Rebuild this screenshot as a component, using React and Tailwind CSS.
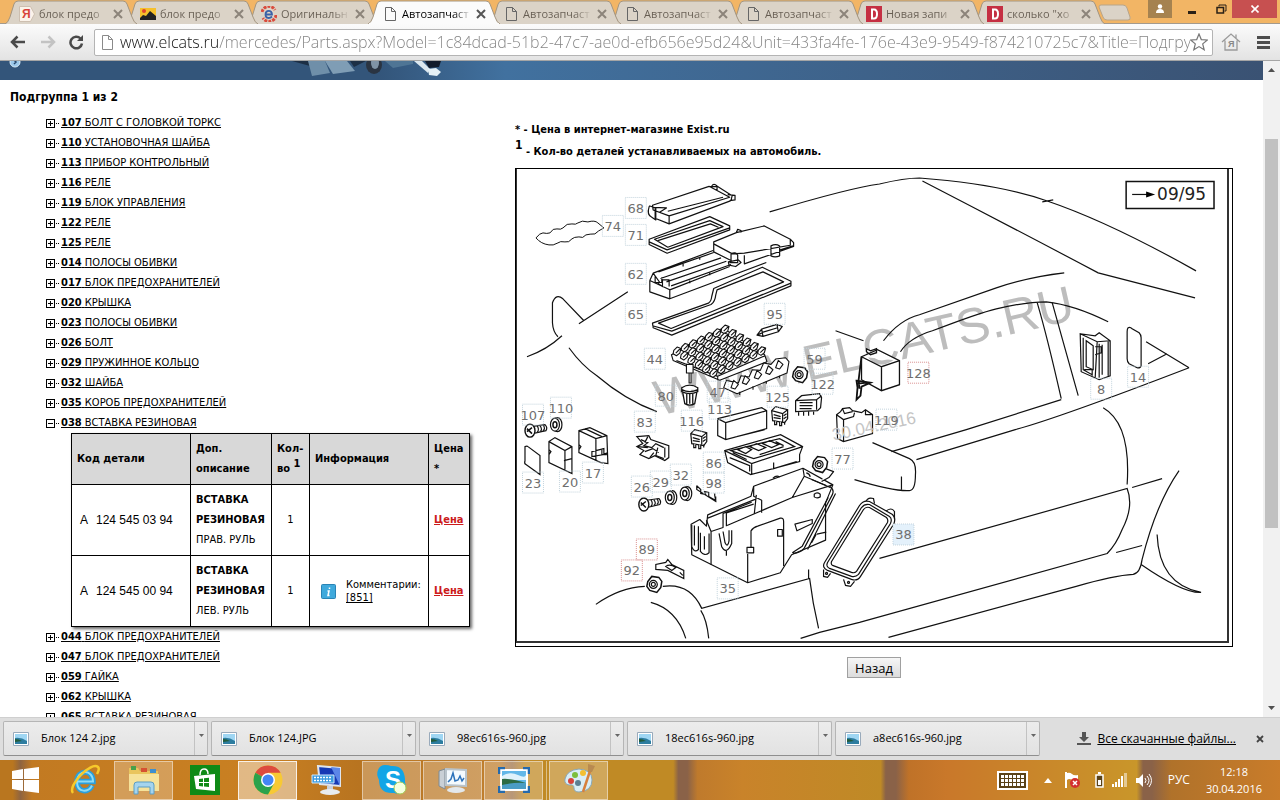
import { Fragment } from 'react'

const tabs = [
  { icon: 'yandex', title: 'блок предо' },
  { icon: 'images', title: 'блок предо' },
  { icon: 'exist', title: 'Оригинальн' },
  { icon: 'page', title: 'Автозапчаст', active: true },
  { icon: 'page', title: 'Автозапчаст' },
  { icon: 'page', title: 'Автозапчаст' },
  { icon: 'page', title: 'Автозапчаст' },
  { icon: 'drive', title: 'Новая запи' },
  { icon: 'drive', title: 'сколько "хо' },
]

const url =
  'www.elcats.ru/mercedes/Parts.aspx?Model=1c84dcad-51b2-47c7-ae0d-efb656e95d24&Unit=433fa4fe-176e-43e9-9549-f874210725c7&Title=Подгруппа'

const parts = [
  ['107', 'БОЛТ С ГОЛОВКОЙ ТОРКС'],
  ['110', 'УСТАНОВОЧНАЯ ШАЙБА'],
  ['113', 'ПРИБОР КОНТРОЛЬНЫЙ'],
  ['116', 'РЕЛЕ'],
  ['119', 'БЛОК УПРАВЛЕНИЯ'],
  ['122', 'РЕЛЕ'],
  ['125', 'РЕЛЕ'],
  ['014', 'ПОЛОСЫ ОБИВКИ'],
  ['017', 'БЛОК ПРЕДОХРАНИТЕЛЕЙ'],
  ['020', 'КРЫШКА'],
  ['023', 'ПОЛОСЫ ОБИВКИ'],
  ['026', 'БОЛТ'],
  ['029', 'ПРУЖИННОЕ КОЛЬЦО'],
  ['032', 'ШАЙБА'],
  ['035', 'КОРОБ ПРЕДОХРАНИТЕЛЕЙ'],
  ['038', 'ВСТАВКА РЕЗИНОВАЯ', true],
  ['044', 'БЛОК ПРЕДОХРАНИТЕЛЕЙ'],
  ['047', 'БЛОК ПРЕДОХРАНИТЕЛЕЙ'],
  ['059', 'ГАЙКА'],
  ['062', 'КРЫШКА'],
  ['065', 'ВСТАВКА РЕЗИНОВАЯ'],
]

const details = [
  { code: '124 545 03 94', side: 'ПРАВ. РУЛЬ' },
  { code: '124 545 00 94', side: 'ЛЕВ. РУЛЬ', note: '[851]' },
]

const files = ['Блок 124 2.jpg', 'Блок 124.JPG', '98ec616s-960.jpg', '18ec616s-960.jpg', 'a8ec616s-960.jpg']

// callouts on the drawing: number, centre x, centre y, kind
const labels = [
  [68, 636, 208], [74, 613, 226], [71, 636, 235], [62, 636, 274], [65, 636, 314], [95, 775, 314],
  [44, 655, 359], [59, 815, 359], [80, 666, 396], [47, 718, 392], [122, 823, 384], [125, 778, 397],
  [113, 720, 409], [116, 692, 421], [107, 533, 415], [110, 561, 408], [83, 645, 422], [128, 919, 373, 'red'],
  [119, 887, 420], [8, 1102, 389], [14, 1139, 377], [77, 843, 459], [86, 714, 463], [98, 714, 483],
  [32, 681, 475], [29, 661, 482], [26, 642, 487], [23, 533, 483], [20, 570, 482], [17, 593, 473],
  [89, 647, 550, 'red'], [92, 632, 571, 'red'], [35, 728, 589], [38, 904, 535, 'active'],
]

function TabIcon({ kind }) {
  if (kind === 'yandex')
    return (
      <svg className="size-4 shrink-0" viewBox="0 0 16 16">
        <path d="M.5.5h11l4 7.500-4 7.500H.5z" fill="#fbf3ea" stroke="#cdbfb0" />
        <text x="3" y="12" fontSize="12" fontWeight="bold" fill="#d8433a" fontFamily="Liberation Sans">Я</text>
      </svg>
    )
  if (kind === 'images')
    return (
      <svg className="size-4 shrink-0" viewBox="0 0 16 16">
        <path fill="#f6c02c" d="M0 2h16v12H0z" />
        <path d="M0 12l3-3 3 1 4-5 6 5v4H0z" fill="#222" />
        <circle cx="4" cy="5" r="2" fill="#e2452f" />
      </svg>
    )
  if (kind === 'exist')
    return (
      <svg className="size-4 shrink-0" viewBox="0 0 16 16" fill="none">
        <path d="M1 6A7 7 0 0 1 14 4M15 9A7 7 0 0 1 2 12" stroke="#d94b3c" strokeWidth="3" strokeDasharray="3 1" />
        <circle cx="8" cy="8" r="5" fill="#e5d6c8" />
        <path d="M4.500 8.500h6.500c0-5-6.500-4.500-6.500 0s4.500 4 6.500 2" stroke="#3a62a8" strokeWidth="1.800" />
      </svg>
    )
  if (kind === 'drive')
    return (
      <svg className="size-4 shrink-0" viewBox="0 0 16 16">
        <path fill="#c52f42" d="M0 0h16v16H0z" />
        <path d="M6 3.500h2q3 0 3 4.500t-3 4.500H6z" fill="none" stroke="#fff" strokeWidth="2" />
      </svg>
    )
  return (
    <svg className="size-4 shrink-0" viewBox="0 0 16 16" fill="none" stroke="#666">
      <path d="M3.500 1.500h6l4 4v9h-10zM9.500 1.500v4h4" />
    </svg>
  )
}

function Tab({ tab, index }) {
  const fill = tab.active ? '#fbfbfb' : '#dbd3c7'
  return (
    <button
      className="relative w-[121px] h-full flex items-center pl-3.5 pt-1 shrink-0 text-left"
      style={{ zIndex: tab.active ? 20 : 10 - index }}
    >
      <svg className="absolute left-0 bottom-0" width="133" height="24" viewBox="0 0 133 24">
        <path d="M0 24 Q3 23 5 17 L9 4 Q10 1 13 1 H118 Q121 1 122 4 L127 17 Q129 23 132 24" fill={fill} stroke="#a39580" />
        {tab.active && <path d="M1 24H131" stroke="#fbfbfb" strokeWidth="2" />}
      </svg>
      <span className="relative flex items-center gap-1">
        <TabIcon kind={tab.icon} />
        <span
          className={`w-[69px] whitespace-nowrap bg-clip-text text-transparent bg-linear-to-r from-75% to-transparent text-[11px] leading-4 ${
            tab.active ? 'from-black' : 'from-[#665d52]'
          }`}
        >
          {tab.title}
        </span>
        <svg className="size-3" viewBox="0 0 12 12" stroke={tab.active ? '#555' : '#8c847a'} strokeWidth="2">
          <path d="M2 2l8 8M10 2l-8 8" />
        </svg>
      </span>
    </button>
  )
}

function TabStrip() {
  return (
    <div className="flex h-6 bg-[#f2b565] shrink-0 border-b border-[#a39a8d]">
      <div className="flex h-6 pl-[5px] flex-1 min-w-0 font-['Open_Sans',sans-serif]">
        {tabs.map((tab, i) => (
          <Tab key={i} tab={tab} index={i} />
        ))}
        <button aria-label="Новая вкладка" className="ml-1 mt-1 shrink-0 h-4">
          <svg width="34" height="17" viewBox="0 0 34 17">
            <path d="M3 1h22q3 0 4 3l3 9q1 3-2 3H9q-3 0-4-3L1 3q0-2 2-2z" fill="#dbd3c7" stroke="#b8a58a" />
          </svg>
        </button>
      </div>
      <div className="flex shrink-0 items-start pr-[3px]">
        <button aria-label="Профиль" className="w-6 h-[18px] bg-[#a58250] flex items-center justify-center">
          <svg width="10" height="10" viewBox="0 0 10 10" fill="#fff">
            <circle cx="5" cy="2.500" r="2.200" />
            <path d="M1 9q0-4 4-4t4 4z" />
          </svg>
        </button>
        <button aria-label="Свернуть" className="w-[38px] h-[18px] flex items-end justify-center pb-1 pl-0.5">
          <span className="w-2 h-[3px] bg-[#2a2016]" />
        </button>
        <button aria-label="Восстановить" className="w-[22px] h-[18px] flex items-center justify-center">
          <svg width="11" height="10" viewBox="0 0 11 10" fill="none" stroke="#2a2016">
            <path d="M3 2.500V1h7v6H8.500" />
            <path d="M1 3.500h6.500v5.500H1z" strokeWidth="1.500" />
          </svg>
        </button>
        <button aria-label="Закрыть" className="w-[45px] h-[18px] bg-[#c75050] flex items-center justify-center">
          <svg width="8" height="8" viewBox="0 0 8 8" stroke="#fff" strokeWidth="1.600">
            <path d="M.5.5l7 7M7.500.5l-7 7" />
          </svg>
        </button>
      </div>
    </div>
  )
}

function Toolbar() {
  return (
    <div className="flex items-center h-[37px] shrink-0 bg-linear-to-b from-[#fbfbfb] to-[#e3e3e3] border-b border-[#a5a5a5] px-2.5">
      <button aria-label="Назад" className="mr-3.5">
        <svg width="16" height="14" viewBox="0 0 16 14" fill="none" stroke="#4a4a4a" strokeWidth="2.500">
          <path d="M15 7H2M7.500 1.500L2 7l5.500 5.500" />
        </svg>
      </button>
      <button aria-label="Вперёд" className="mr-3">
        <svg width="16" height="14" viewBox="0 0 16 14" fill="none" stroke="#c3c3c3" strokeWidth="2.500">
          <path d="M1 7h13M8.500 1.500L14 7l-5.500 5.500" />
        </svg>
      </button>
      <button aria-label="Обновить" className="mr-2.5">
        <svg width="16" height="16" viewBox="0 0 16 16" fill="none" stroke="#4a4a4a" strokeWidth="2.500">
          <path d="M12.500 4.500A5.800 5.800 0 1 0 14 9.500" />
          <path d="M9 7h6V1z" fill="#4a4a4a" stroke="none" />
        </svg>
      </button>
      <div className="flex items-center flex-1 min-w-0 h-[27px] bg-white border border-[#b4b4b4] rounded-xs pl-1.5 pr-1">
        <svg width="13" height="17" viewBox="0 0 13 17" fill="none" stroke="#8a8a8a" className="shrink-0 mr-1.5">
          <path d="M1.500 1.500h6l4 4v10h-10zM7.500 1.500v4h4" />
        </svg>
        <input
          type="text"
          aria-label="Адрес"
          defaultValue={url}
          className="flex-1 min-w-0 text-[16px] leading-6 text-transparent bg-clip-text bg-[linear-gradient(90deg,#111_99px,#808080_99px)] font-['Open_Sans',sans-serif] font-light outline-none"
        />
        <svg width="18" height="18" viewBox="0 0 18 18" fill="#fff" stroke="#777" strokeWidth="1.200" className="shrink-0">
          <path d="M9 1l2.300 5.600 6 .4-4.600 3.900 1.500 5.900L9 13.600l-5.200 3.200 1.500-5.900L.7 7l6-.4z" />
        </svg>
      </div>
      <button aria-label="Домой" className="ml-2 mr-4">
        <svg width="20" height="20" viewBox="0 0 20 20" fill="none" stroke="#9a9a9a" strokeWidth="1.300">
          <path d="M1 10l9-8 9 8M4 8.500V18h12V8.500M15 6V2.500" />
          <text x="7" y="15" fontSize="9" fill="#888" stroke="none" fontFamily="Liberation Sans" fontWeight="bold">Я</text>
        </svg>
      </button>
      <button aria-label="Меню" className="flex flex-col gap-[2px]">
        <span className="w-[13px] h-[3px] bg-[#4d4d4d]" />
        <span className="w-[13px] h-[3px] bg-[#4d4d4d]" />
        <span className="w-[13px] h-[3px] bg-[#4d4d4d]" />
      </button>
    </div>
  )
}

function Banner() {
  return (
    <div className="h-[19px] shrink-0 bg-linear-to-r from-[#33557a] from-30% via-[#41719f] via-40% to-[#3a5273]">
      <svg width="460" height="19" viewBox="0 0 460 19">
        <circle cx="15" cy="1" r="5" fill="#9cc8ea" stroke="#d8ecf8" />
        <path d="M14-1l2 2-2 2" stroke="#24466a" fill="none" strokeWidth="1.500" />
        <path d="M292 0h20l-2 5z" fill="#1d2f45" />
        <path d="M308 0l4 15 18-3-5-12z" fill="#6f8fa9" />
        <path d="M325 0l8 13 22-3-8-10z" fill="#7f9db5" />
        <path d="M350 0l4 6 12-6z" fill="#1d2f45" />
        <ellipse cx="374" cy="4" rx="8" ry="9" fill="#2a3442" />
        <ellipse cx="375" cy="2" rx="4" ry="6" fill="#7f93a6" />
        <path d="M385 0l8 7 20-4V0z" fill="#4f7595" />
        <path d="M414 0h8l8 8-2 4z" fill="#dce8f0" />
        <path d="M425 0h16l-2 6-10 1z" fill="#121c2c" />
        <path d="M428 8l8-1 5 4-4 4-8-1z" fill="#e4f0f6" />
      </svg>
    </div>
  )
}

function DetailTable() {
  return (
    <table className="ml-[71px] w-[399px] table-fixed border-collapse border border-black text-[11px] leading-5 shadow-[2px_2px_3px_#666] bg-white">
      <thead>
        <tr className="bg-[#d8d8d8] text-left">
          <th className="w-[119px] border border-black p-[5px] whitespace-nowrap">Код детали</th>
          <th className="w-[81px] border border-black p-[5px]">Доп. описание</th>
          <th className="w-[38px] border border-black p-[5px] whitespace-nowrap">
            Кол-
            <br />
            во <sup className="text-[11px]">1</sup>
          </th>
          <th className="w-[119px] border border-black p-[5px]">Информация</th>
          <th className="border border-black p-[5px]">
            Цена
            <br />*
          </th>
        </tr>
      </thead>
      <tbody>
        {details.map((d) => (
          <tr key={d.code}>
            <td className="border border-black p-[5px] pl-2 text-[12px] font-['Liberation_Sans',sans-serif]">
              <span className="mr-2">A</span>
              {d.code}
            </td>
            <td className="border border-black p-[5px] whitespace-nowrap">
              <b>
                ВСТАВКА
                <br />
                РЕЗИНОВАЯ
              </b>
              <br />
              {d.side}
            </td>
            <td className="border border-black p-[5px] text-center">1</td>
            <td className="border border-black p-[5px]">
              {d.note && (
                <div className="flex items-center gap-2.5 pl-1.5">
                  <svg width="15" height="15" viewBox="0 0 15 15" className="shrink-0">
                    <rect x=".5" y=".5" width="14" height="14" rx="1" fill="#3fa9dc" stroke="#2a83b5" />
                    <path d="M8.500 3.500v1.500M6.500 7h1.500l-1 4.500h1.500" stroke="#fff" strokeWidth="1.500" fill="none" />
                  </svg>
                  <span className="leading-[13px]">
                    Комментарии:
                    <br />
                    <a href="#851" className="underline">{d.note}</a>
                  </span>
                </div>
              )}
            </td>
            <td className="border border-black p-[5px]">
              <a href="#price" className="underline font-bold text-[#cc1b1b]">Цена</a>
            </td>
          </tr>
        ))}
      </tbody>
    </table>
  )
}

function PartList() {
  return (
    <ul>
      {parts.map(([num, name, open]) => (
        <Fragment key={num}>
          <li className="flex items-center h-5 pl-[46px] whitespace-nowrap">
            <svg width="15" height="9" viewBox="0 0 15 9" className="shrink-0" shapeRendering="crispEdges">
              <path d={open ? 'M.5.5h8v8h-8zM2 4.500h5' : 'M.5.5h8v8h-8zM2 4.500h5M4.500 2v5'} fill="none" stroke="#000" />
              <path d="M10 4h1v1h-1zM12 4h1v1h-1z" />
            </svg>
            <a href={'#' + num} className="text-[11px] leading-5 underline">
              <b>{num}</b> {name}
            </a>
          </li>
          {open && (
            <li>
              <DetailTable />
            </li>
          )}
        </Fragment>
      ))}
    </ul>
  )
}

// rows of terminals on fuse block 44
const studs = []
for (let row = 0; row < 6; row++)
  for (let col = 0; col < 7; col++) studs.push([492 + col * 24 + row * 22, 722 - col * 11 + row * 13])

function Nut({ x, y }) {
  return (
    <g transform={`translate(${x} ${y})`} fill="#fff">
      <path d="M-7-3l4-5 7 1 3 4-1 6-4 5-7-2-3-4z" strokeWidth="1.500" />
      <circle cx="-1.500" r="4" />
      <circle cx="-1.500" r="2" />
    </g>
  )
}

function Screw({ x, y }) {
  return (
    <g transform={`translate(${x} ${y})`} fill="#fff">
      <path d="M-3-4l14-2q3 3 1 6l-13 3z" />
      <path d="M3-5q3 4 0 7M6-5q3 4 0 6M9-6q3 4 0 6" />
      <ellipse cx="-4" cy="0" rx="5" ry="6.500" strokeWidth="1.400" />
      <path d="M-7-2l5 5M-2-3l-5 4" strokeWidth="1.500" />
    </g>
  )
}

function Washer({ x, y }) {
  return (
    <g transform={`translate(${x} ${y})`} fill="#fff">
      <ellipse cx="1.500" cy="0" rx="4.500" ry="7" />
      <ellipse cx="-1" cy="0" rx="4.500" ry="6.500" />
      <ellipse cx="-1" cy="0" rx="2" ry="3" strokeWidth="1.500" />
    </g>
  )
}

function Relay({ x, y }) {
  return (
    <g transform={`translate(${x} ${y})`} fill="#fff">
      <path d="M-8-5l4-4 12 3v9l-3 4-12-2zM-8-5l11 3 5-4M3-2v8" />
      <path d="M-6-1l7 2M-6 2l7 1M4 0l3-2M4 3l3-2M-5 5v4h2v-3M0 6v4h2v-4M5 6v3" />
    </g>
  )
}

function PartsDrawing() {
  return (
    <svg
      viewBox="517 169 711 473"
      className="block w-full h-auto font-normal"
      fill="none"
      stroke="#111"
      strokeWidth="1.200"
      role="img"
      aria-label="Схема деталей"
    >
      <text transform="translate(659 416) rotate(-13)" fontSize="50" fill="#bdbdbd" stroke="none" fontFamily="Liberation Sans">
        WWW.ELCATS.RU
      </text>

      {/* body lines */}
      <path d="M770 212Q850 188 880 184Q905 178 920 178Q1000 184 1048 201Q1110 222 1197 271M923 181Q1010 226 1099 273L1196 298M1043 202l11-2" />
      <path d="M884 341Q900 320 920 315L997 288Q1030 277 1065 273M901 352Q910 338 933 331Q980 313 997 309Q1027 302 1047 302Q1075 305 1109 322" />
      <path d="M1038 303Q1048 337 1062 399M1053 303L1079 396M1062 400L967 430L892 452M1190 368Q1060 418 1016 430L917 460M1147 342l43 26M1149 364l19-10" />
      <path d="M1104 408Q1132 424 1128 485M873 443L910 459Q917 462 916 475Q916 491 910 491Q895 492 855 480M902 477v13" />
      <path d="M880 559L1128 489Q1135 507 1123 530Q1117 545 1108 554L860 623L820 633L801 639M1133 488l30-9M1117 553l26-7" />
      <path d="M1180 471Q1157 504 1143 560Q1141 574 1134 575Q1115 576 1077 587L889 638M1142 565Q1184 594 1202 593Q1160 585 1158 535" />
      <path d="M596 605Q620 588 645 587M663 587Q690 583 702 609L810 579Q813 604 819 629M809 570v9M651 603Q677 610 686 639M701 611Q707 620 709 639" />
      <path d="M579 324L628 292M584 321L563 299Q556 293 552.500 303V323Q553 332 558 337M527 357Q547 350 562 336M569 348Q582 366 597 376Q625 400 657 412M836 331l28 10" />

      {/* left strip 74 */}
      <path d="M536 238q4-5 7-5 4 1 7 0 3-5 7-4 4 1 6-1 4-5 9-4 4 1 6-1 4-3 10-1 7-2 10 1l6 5q-6 3-9 6-5 0-9 1-3 4-7 2-5 0-7 2-3 4-7 3-5-1-7 1-5 3-9 2-8-1-13-7z" strokeWidth="1" />

      {/* covers 68, 71 */}
      <g transform="translate(510 110) scale(.33333)" strokeWidth="3.600" strokeLinejoin="round">
        <path d="M428 286L598 229L660 262L478 318L430 300zM598 229L625 230L665 256M474 304L640 262M478 318V342L436 325M478 342L664 272L668 254M418 290q-8 25 8 32l12 8v-36l-18-6zM430 292l40 2-22 14M436 296v30M606 228q6-10 16 0v12M654 254l22 2v14l-16 2" />
        <path d="M418 388L600 320L660 348V360L472 430L418 404zM434 388L600 332L640 350L474 412zM418 396l54 24L660 354M444 392L602 342L626 352" />
      </g>

      {/* lid 62 */}
      <g transform="translate(510 110) scale(.33333)" strokeWidth="3.600" strokeLinejoin="round">
        <path d="M420 512L430 490L610 422M420 512V546L480 567L770 458M420 512L480 540V567M480 540L660 470M430 490L450 518M446 486L612 428M452 506L634 444M470 516L650 454M484 528L664 464M436 500v18h20v-16M444 520l14 10v-20h20v20" />
        <path d="M612 396L680 368L764 348L842 388V406L704 430L668 432L612 402zM612 396V426L664 452V432M842 388L852 398V410L704 462V436M680 368l4-10 10 4v6M784 408q14-8 26 0v30q-14 6-26 0zM812 420l38-12M664 432q14-8 20 4v22h-24M656 456l30-6 8 8-16 12-20-4zM520 462v8M570 442v8M540 512v8M600 488v8" />
      </g>

      {/* gasket 65 and bulb 95 */}
      <g transform="translate(510 110) scale(.33333)" strokeWidth="3.600" strokeLinejoin="round">
        <path d="M428 640L596 580Q604 576 606 560L612 536L758 472L844 514V528L486 676L430 654zM446 640L604 584Q616 576 618 556L622 540L760 486L822 516L484 656zM428 648l58 16L844 520" />
        <path d="M742 676l14-18 46-14 16 6-12 16-46 14zM756 658l4 22M802 644l4 22M742 676l14-6M758 668l46-14" />
      </g>

      {/* fuse blocks 44, 47 */}
      <g transform="translate(510 110) scale(.33333)" strokeWidth="3.300" strokeLinejoin="round" fill="#fff">
        <path d="M485 735L640 655L765 735L772 756L630 812L490 752zM500 752L624 800L766 738M624 800v12" />
        {studs.map(([x, y], i) => (
          <path key={i} d={`M${x} ${y}l10-10 12 4-4 14-10 8-10-6zM${x + 6} ${y + 8}l10-10 6-4`} />
        ))}
        <path d="M650 812l-8 22 40 18 150-62 6-34-10-12-30 4-14 16-22-4-10 22-24-2-10 22-24-4-8 22z" />
        <path d="M672 812l14 12-10 14-12-4zM706 798l14 12-10 14-12-4zM742 782l14 12-10 14-12-4zM776 768l14 12-10 14-12-4zM806 752l14 12-10 14-12-4zM690 846v10M730 830v10M770 814v8M810 798v8" />
        <path d="M530 764h20v26h-20zM538 790h6v30h-6z" />
      </g>

      {/* motor 80 */}
      <g fill="#fff" strokeWidth="1.300">
        <path d="M682 388q8-5 16 0v4q-8 4-16 0zM683 393l2 11q5 3 10 0l2-11M687 394v10M690 394v10M693 394v10M682 390q8 4 16 0" />
      </g>

      <Nut x={801} y={375} />
      <Nut x={821} y={465} />
      <Nut x={655} y={585} />
      <Screw x={534} y={431} />
      <Screw x={648} y={505} />
      <Washer x={556} y={425} />
      <Washer x={671} y={498} />
      <Washer x={686} y={494} />
      <Relay x={699} y={439} />
      <Relay x={780} y={416} />

      {/* relay 122, control unit 113 */}
      <g fill="#fff">
        <path d="M796 401l6-5 18-2 2 4-1 10-3 3-22 1zM796 401l21-1 5-4M817 400v10M800 403h13M800 406h13M800 409h12M799 412v4M804 412v4M809 412v4M814 412v3" />
        <path d="M718 419L762 408L767 411V429L726 440L718 436zM718 419L726 423V440M726 423L767 411M737 437l28-7" />
      </g>

      {/* boxes 17, 20, 23 */}
      <g fill="#fff">
        <path d="M579 431L590 428L607 436L608 464L601 463L579 453zM579 431L596 439L607 436M585 429L602 437M596 439V461M579 445l2 2-2 3M592 452l12-3v6l-12 2zM602 449v6h5M603 455l5-2" />
        <path d="M549 442L555 438L572 447V474L549 463zM549 442L565 451L572 447M565 451V470M549 450l2 2-2 3M564 461l8-2" />
        <path d="M525 447q2-1 3 0l12 9V475L526 465q-2-1-1-4z" />
      </g>

      {/* bracket 83 and clip 98 */}
      <g fill="#fff">
        <path d="M637 437l12-1 2 4 18 6v12l-4 3-10-5-6 3-9-4 4-4-7-4 6-3z" />
        <path d="M641 440l7 3-4 3 8 2 4-4 8 4M645 452l8-3 6 4M650 458l4-5M658 448l-2 8 8 3M665 448v10M638 447l10 1M648 437l-3 6" />
        <path d="M697 486l4 4v4l5 1-1-3 4 1v4l7 4-1-5v-2M697 486v4l19 12v-5" fill="none" />
      </g>

      {/* fuse tray 86 */}
      <g fill="#fff">
        <path d="M725 451L781 435L803 447L800 455V462L751 475L728 463zM725 451L752 464L803 447M752 464V475M731 451L780 439L795 447L754 459zM738 450l8 4 6-4-6-3zM750 447l9 4 7-3-9-4zM763 444l9 4 7-3-9-4zM776 442l8 4M733 453l14 7M760 455l24-8M774 463v6l23-7M730 458l20 8v6" />
      </g>

      {/* main box 35 */}
      <g transform="translate(510 370) scale(.33333)" strokeWidth="3.600" strokeLinejoin="round" fill="#fff">
        <path d="M546 556L544 464L570 450L590 470L594 436L724 380L732 350L880 296L970 346L948 400V512L846 556L812 610L714 640z" />
        <path d="M594 446L740 388M590 452L604 486L640 474V432L726 398M650 470V430L732 404M732 350V380L756 392V430M740 376l-6 56M652 468L848 384L970 346M848 384L884 320L880 296M884 320L950 348M604 486V586M714 640V554M724 540V484Q730 474 744 470L812 446Q822 444 822 456V590" fill="none" />
        <path d="M712 534h20v16h-20zM804 480h14v20h-14zM856 464L908 450V462L862 484zM914 374q8-8 18 0v8q-10 6-18 0zM906 330l56 24M936 336l22-12 14-18-22-8" />
        <path d="M960 350Q976 360 968 376L884 536Q874 550 850 552M978 372L894 540M956 384L878 530L848 550M922 494l28-6M906 520l14-26" fill="none" />
        <path d="M546 466v66q8 20 20 8v-70M572 490v56q12 16 26 4v-58M584 500v40M554 468v60M628 492l8 40q14 26 30-10v-40M640 486l6 34q8 16 12-6v-32M650 545v14" />
        <path d="M790 326q10-10 20-4M890 310q10 2 12 12" fill="none" />
      </g>

      {/* bracket 89 */}
      <path d="M656 565v5l12 1 16 8v-8l-12-6-4-5-2 3zM666 567q4-3 10 1l-4 3zM680 573l3 3" fill="#fff" />

      {/* gasket 38 */}
      <g fill="#fff">
        <path d="M824 570v7l4 1 3-4M844 580l2 6 5 1 4-5M866 503q2-6 8-4l1 5M886 512q6-5 9 0v8" />
        <circle cx="827" cy="574" r="1" />
        <circle cx="849" cy="583" r="1" />
        <path d="M825 563L860 506Q864 500 870 502L893 515Q897 519 894 525L861 577Q858 582 852 580L828 571Q822 568 825 563z" />
        <path d="M828 563L862 508Q865 504 870 505L890 517Q893 519 891 524L859 575Q856 578 852 577L830 569Q826 567 828 563z" />
        <path d="M832 562L864 510Q866 507 870 508L887 518Q889 520 888 523L857 572Q855 574 852 573L833 566Q831 565 832 562z" />
      </g>

      {/* relay 128 and unit 119 */}
      <g fill="#fff" strokeWidth="1.300">
        <path d="M862 357L878 350L900 361V385L882 391L862 380zM862 357L882 367L900 361M882 367V391M867 352v-3l4 2 6-2v4l-6 2z" />
        <path d="M862 357l-3 24 1 8M857 381l14 2-9 4-1 9-4 4 1-12zM858 384l10-1" strokeWidth="1.800" />
      </g>
      <path d="M837 415L841 412L843 409L850 408L853 411L862 413L866 410L873 415V434L844 442L838 439zM837 415L844 420V442M844 420l10-3 1-4M843 409l2 5 8-2M866 410v5h6" fill="#fff" />

      {/* unit 8, pad 14 */}
      <g fill="#fff">
        <path d="M1081 334L1096 336L1100 333L1111 341V376L1100 380L1082 372zM1081 334L1098 342L1111 341M1098 342L1096 378M1084 338V370L1093 375M1087 341v26l7 3v-24zM1100 344v34M1096 347h6v6l-6 2M1103 345v30M1085 370h8v6M1109 342v34" />
        <path d="M1129 328q2-1 4 1l7 4q2 2 2 5v28q-1 3-4 2l-8-4q-2-2-2-5v-27q0-3 1-4z" />
      </g>

      {/* edition stamp */}
      <path d="M1127 181.500h88v27h-88z" strokeWidth="1.500" />
      <path d="M1133 194.500h15" />
      <path d="M1147 191.500l9 3-9 3z" fill="#000" stroke="none" />
      <text x="1158" y="200" fontSize="17" fill="#222" stroke="none" fontFamily="DejaVu Sans">09/95</text>
      <text transform="translate(834 441) rotate(-12)" fontSize="17" fill="#c4c4c4" stroke="none" fontFamily="Liberation Sans">
        30.04.2016
      </text>

      {labels.map(([n, x, y, kind]) => (
        <g key={n}>
          <rect
            x={x - 10.5}
            y={y - 10.5}
            width="21"
            height="21"
            strokeWidth="1"
            strokeDasharray="1 1"
            fill={kind === 'active' ? '#e4f1fb' : 'none'}
            stroke={kind === 'red' ? '#d98f8f' : '#c2d3dc'}
          />
          <text x={x} y={y + 5} fontSize="13" textAnchor="middle" fill="#6f6f6f" stroke="none" fontFamily="DejaVu Sans">
            {n}
          </text>
        </g>
      ))}
    </svg>
  )
}

function Scrollbar() {
  return (
    <div className="w-[17px] shrink-0 bg-[#f1f1f1] flex flex-col items-center py-1.5">
      <svg width="7" height="6" viewBox="0 0 7 6" className="shrink-0">
        <path d="M0 5l3.500-4L7 5z" fill="#505050" />
      </svg>
      <div className="flex-1 w-full px-0.5 flex flex-col">
        <div className="basis-[10.500%]" />
        <div className="basis-[61.500%] bg-[#c1c1c1]" />
      </div>
      <svg width="7" height="6" viewBox="0 0 7 6" className="shrink-0">
        <path d="M0 1l3.500 4L7 1z" fill="#505050" />
      </svg>
    </div>
  )
}

function Page() {
  return (
    <div className="flex flex-1 min-h-0 bg-white">
      <main className="flex-1 min-w-0 overflow-hidden flex flex-col text-black font-['DejaVu_Sans_Condensed','DejaVu_Sans',sans-serif]">
        <Banner />
        <div className="flex items-start">
          <section className="w-[515px] shrink-0">
            <h1 className="pl-2.5 pt-[7px] mb-1.5 text-[12px] leading-5 font-bold">Подгруппа 1 из 2</h1>
            <PartList />
          </section>
          <section className="flex-1 min-w-0 pt-10 pr-[30px] text-[11px] font-bold">
            <p className="leading-5">* - Цена в интернет-магазине Exist.ru</p>
            <p className="leading-6 mb-1">
              <sup className="text-[12px]">1</sup> - Кол-во деталей устанавливаемых на автомобиль.
            </p>
            <div className="border border-black pr-[3px] pb-[3px]">
              <div className="border-r-2 border-b-2 border-l border-[#333]">
                <PartsDrawing />
              </div>
            </div>
            <div className="flex justify-center mt-2.5">
              <button className="h-[21px] w-[54px] border border-[#a0a0a0] bg-linear-to-b from-[#f6f6f6] to-[#dcdcdc] text-[13px] leading-4 font-normal font-['Open_Sans',sans-serif]">
                Назад
              </button>
            </div>
          </section>
        </div>
      </main>
      <Scrollbar />
    </div>
  )
}

function Downloads() {
  return (
    <div className="flex items-start h-[43px] shrink-0 bg-[#dedede] border-t border-[#cfcfcf] pl-[3px] pt-[3px] pr-4 font-['Open_Sans',sans-serif] text-[11px]">
      <div className="flex gap-[3px] flex-1 min-w-0">
        {files.map((f) => (
          <div key={f} className="flex w-[205px] h-[35px] border border-[#b5b5b5] border-b-[#8f8f8f] rounded-xs bg-linear-to-b from-[#ececec] to-[#e2e2e2]">
            <button className="flex flex-1 items-center gap-3 pl-[9px] border-r border-[#c2c2c2]">
              <svg width="16" height="14" viewBox="0 0 16 14">
                <path d="M.5.5h15v13H.5z" fill="#fff" stroke="#9ab" />
                <path d="M2 2h12v10H2z" fill="#9fd6f3" />
                <path d="M2 6q6-1 12 3v3H2z" fill="#2d7da0" />
                <path d="M2 7q4 0 7 2l-7 1z" fill="#235c3c" />
              </svg>
              {f}
            </button>
            <button aria-label="Действия" className="w-3 pt-3 flex justify-center">
              <svg width="5" height="4" viewBox="0 0 5 4">
                <path d="M0 0h5L2.500 3z" fill="#666" />
              </svg>
            </button>
          </div>
        ))}
      </div>
      <div className="flex items-center h-[35px] shrink-0">
        <svg width="14" height="14" viewBox="0 0 14 14" fill="#555" className="mr-1.5">
          <path d="M5 0h4v5h3L7 10 2 5h3zM0 11h14v2H0z" />
        </svg>
        <a href="#downloads" className="underline mr-5 text-[12px]">Все скачанные файлы...</a>
        <button aria-label="Закрыть панель">
          <svg width="8" height="8" viewBox="0 0 8 8" stroke="#444" strokeWidth="1.800">
            <path d="M1 1l6 6M7 1L1 7" />
          </svg>
        </button>
      </div>
    </div>
  )
}

function AppButton({ label, open, current, children }) {
  return (
    <button
      aria-label={label}
      className={`w-[59px] h-[39px] flex items-center justify-center border ${
        current ? 'bg-white/45 border-white/80' : open ? 'bg-white/25 border-white/45' : 'border-transparent'
      }`}
    >
      {children}
    </button>
  )
}

function Taskbar() {
  return (
    <footer className="flex items-center h-10 shrink-0 text-white font-['Open_Sans',sans-serif] text-[12px] bg-[linear-gradient(90deg,#b9761f_0%,#b9761f_1%,#8f6440_1.600%,#c27a22_2.500%,#c98022_20%,#b87420_28%,#c08030_39%,#a0754c_40%,#c08a25_41%,#c08a25_52.600%,#8a6248_53%,#8a6248_53.700%,#bf7a2c_54.500%,#c9832a_58%,#bf8a26_68.800%,#8a6248_69.200%,#8a6248_70%,#bf7228_71%,#c9782a_74%,#c9962a_88.800%,#8a6248_89.300%,#8a6248_90%,#b0722a_91.500%,#c97c2a_100%)]">
      <button aria-label="Пуск" className="w-[55px] flex items-center pl-3">
        <svg width="27" height="26" viewBox="0 0 27 26" fill="#fff">
          <path d="M0 4l11-2v10H0zM12 2l15-2v12H12zM0 13h11v11L0 22zM12 13h15v13l-15-2z" />
        </svg>
      </button>
      <AppButton label="Internet Explorer">
        <svg width="32" height="32" viewBox="0 0 32 32" fill="none">
          <path d="M6 17.500h18c0-13-16-12-16 0s12 11 15 4" stroke="#2a9fdc" strokeWidth="5.500" />
          <path d="M6 17.500h18c0-13-16-12-16 0s12 11 15 4" stroke="#8edcf6" strokeWidth="2" />
          <path d="M4 29C-2 22 22-3 29 3c2 2 0 5-1 7" stroke="#f7c92b" strokeWidth="2.500" />
        </svg>
      </AppButton>
      <AppButton label="Проводник" open>
        <svg width="32" height="30" viewBox="0 0 32 30">
          <path d="M1 3h9l2 3h18v20H1z" fill="#e9c55e" />
          <path d="M3 1h5v4H3z" fill="#47a04b" />
          <path d="M13 3h6v4h-6z" fill="#d65032" />
          <path d="M22 4h6v4h-6z" fill="#3c8fd0" />
          <path d="M1 9h30v17H1z" fill="#f6e29a" />
          <path d="M6 29v-9q0-3 3-3h14q3 0 3 3v9h-4v-7H10v7z" fill="#a5d4ee" stroke="#5a9dc4" />
        </svg>
      </AppButton>
      <span className="w-0.5" />
      <AppButton label="Магазин">
        <svg width="30" height="30" viewBox="0 0 30 30">
          <path fill="#0f8a16" d="M0 0h30v30H0z" />
          <path d="M4 11l21-2v17L6 24z" fill="#fff" />
          <path d="M10 10q0-6 4-6t4 5" stroke="#fff" strokeWidth="1.500" fill="none" />
          <path d="M9 14l4-.5V17H9zM14 13.300l5-.6V17h-5zM9 18h4v3.500L9 21zM14 18h5v4l-5-.5z" fill="#0f8a16" />
        </svg>
      </AppButton>
      <span className="w-1" />
      <AppButton label="Chrome" open current>
        <svg width="30" height="30" viewBox="0 0 30 30">
          <circle cx="15" cy="15" r="14.500" fill="#f7c934" />
          <path d="M15 15L2.400 7.800A14.500 14.500 0 0 1 27.600 7.800H15z" fill="#dd4b3e" />
          <path d="M2.400 7.800A14.500 14.500 0 0 0 15 29.500l6-11L15 15z" fill="#2ba24c" />
          <circle cx="15" cy="15" r="7" fill="#fff" />
          <circle cx="15" cy="15" r="5.500" fill="#4486f4" />
        </svg>
      </AppButton>
      <AppButton label="Клавиатура и экран">
        <svg width="32" height="32" viewBox="0 0 32 32">
          <path d="M7 2l22 2v18L9 20z" fill="#1739b4" stroke="#dfe5ee" strokeWidth="2" />
          <path d="M20 3l9 1v18z" fill="#5c86e8" />
          <path d="M16 22h6v5h-6z" fill="#ccd2da" />
          <ellipse cx="19" cy="28" rx="10" ry="3" fill="#e8ecf0" />
          <path d="M1 11h22v8H1z" fill="#3c9be0" stroke="#cfe8fa" />
          <path d="M3 13.500h18M3 16.500h18" stroke="#fff" strokeDasharray="2 1" strokeWidth="1.500" />
        </svg>
      </AppButton>
      <span className="w-1.5" />
      <AppButton label="Skype" open>
        <svg width="32" height="32" viewBox="0 0 32 32">
          <path d="M9 1q4 0 6 1 13-1 14 13v3q2 6-2 10-4 3-9 1Q3 30 3 16 0 10 2 6q2-5 7-5z" fill="#12a5e6" />
          <text x="9" y="24" fontSize="24" fontWeight="bold" fill="#fff" fontFamily="Liberation Sans">S</text>
          <circle cx="24" cy="24" r="6" fill="#f4ffdf" stroke="#a4cc52" />
        </svg>
      </AppButton>
      <span className="w-0.5" />
      <AppButton label="Монитор ресурсов" open>
        <svg width="32" height="28" viewBox="0 0 32 28">
          <path d="M2 5l6-2v20l-6-3z" fill="#c9d0d6" stroke="#7d8a94" />
          <path d="M9 3l20 1v16L9 19z" fill="#f4fafe" stroke="#b9c4cc" strokeWidth="2" />
          <path d="M11 16l3-3 2-6 2 8 3-1 2-4 2 5 2-3" stroke="#2c72ba" strokeWidth="1.500" fill="none" />
          <ellipse cx="19" cy="24" rx="9" ry="3" fill="#e3e8ec" />
        </svg>
      </AppButton>
      <span className="w-0.5" />
      <AppButton label="Просмотр фотографий" open>
        <svg width="32" height="26" viewBox="0 0 32 26">
          <path d="M2 2h28v22H2z" fill="#fff" />
          <path d="M4 4h24v18H4z" fill="#62b7e8" />
          <path d="M4 9q8-5 16-1t8-1v6H4z" fill="#dff2fb" />
          <path d="M4 12q8-1 24 4v1L4 18z" fill="#2c6a43" />
          <path d="M4 18q12-3 24-2v6H4z" fill="#4a9cc4" />
          <path d="M1 7V1h6M25 1h6v6M31 19v6h-6M7 25H1v-6" fill="none" stroke="#246aad" strokeWidth="2.500" />
        </svg>
      </AppButton>
      <span className="w-1 h-[39px] border-r border-white/45 mr-0.5" />
      <AppButton label="Paint" open>
        <svg width="32" height="32" viewBox="0 0 32 32">
          <path d="M16 5q13 1 13 11 0 11-13 12-5 0-5-4t-5-3q-5-1-4-6Q4 6 16 5z" fill="#d9edf6" stroke="#88a8b8" />
          <circle cx="8" cy="17" r="3" fill="#d8433a" />
          <circle cx="12" cy="11" r="3" fill="#7cbf3c" />
          <circle cx="20" cy="9" r="3" fill="#f3bf32" />
          <circle cx="15" cy="19" r="3" fill="#5c7f92" />
          <path d="M28 4l-8 24" stroke="#d7803c" strokeWidth="2.500" />
          <path d="M25 0l7 2-3 6h-4z" fill="#b98a50" />
        </svg>
      </AppButton>
      <div className="flex items-center ml-auto pr-[18px]">
        <svg width="31" height="19" viewBox="0 0 31 19" className="mr-4">
          <path d="M1 1h29v17H1z" fill="#5a4218" stroke="#fff" strokeWidth="2" />
          <path d="M4 5.500h23M4 9.500h23M4 13.500h23" stroke="#fff" strokeWidth="3" strokeDasharray="3 1" />
        </svg>
        <svg width="8" height="5" viewBox="0 0 8 5" className="mr-3">
          <path d="M0 5l4-5 4 5z" fill="#fff" />
        </svg>
        <svg width="17" height="16" viewBox="0 0 17 16" className="mr-3.5">
          <path d="M2 0v16" stroke="#fff" strokeWidth="2" />
          <path d="M3 1q3-1 5 1t6 1v6q-3 1-6-1T3 8z" fill="#fff" />
          <circle cx="11" cy="11" r="5" fill="#d32f2f" />
          <path d="M9 9l4 4M13 9l-4 4" stroke="#fff" strokeWidth="1.500" />
        </svg>
        <svg width="9" height="16" viewBox="0 0 9 16" className="mr-2">
          <path d="M1 3h7v12H1z" fill="#5a4218" stroke="#fff" strokeWidth="1.500" />
          <path d="M3 0h3v2H3zM3 8h3v5H3z" fill="#fff" />
        </svg>
        <svg width="16" height="14" viewBox="0 0 16 14" className="mr-2" fill="#fff">
          <path d="M0 11h2v3H0zM3 9h2v5H3zM6 6h2v8H6zM9 3h2v11H9z" />
          <path d="M12 0h3v14h-3z" opacity=".5" />
        </svg>
        <svg width="16" height="15" viewBox="0 0 16 15" className="mr-4">
          <path d="M0 5h3l4-4v13l-4-4H0z" fill="#fff" />
          <path d="M9 5q2 2.500 0 5M11 3q4 4.500 0 9M13 1q5 6.500 0 13" stroke="#fff" fill="none" />
        </svg>
        <span className="mr-4">РУС</span>
        <div className="text-center text-[11px] leading-[17px]">
          12:18
          <br />
          30.04.2016
        </div>
      </div>
    </footer>
  )
}

export default function App() {
  return (
    <div className="flex flex-col h-screen overflow-hidden bg-white text-black">
      <TabStrip />
      <Toolbar />
      <Page />
      <Downloads />
      <Taskbar />
    </div>
  )
}
